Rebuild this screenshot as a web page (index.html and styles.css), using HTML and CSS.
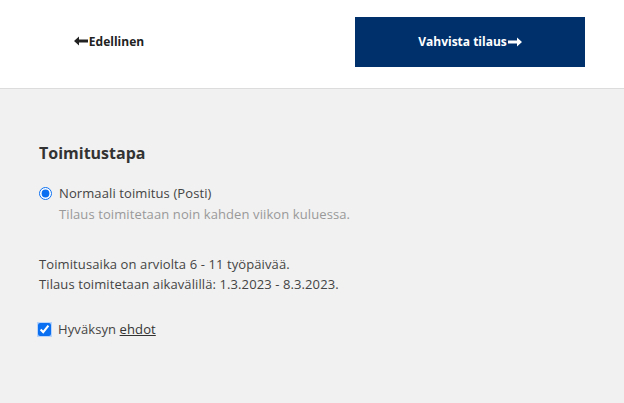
FILE: index.html
```html
<!DOCTYPE html>
<html lang="fi">
<head>
<meta charset="utf-8">
<title>Toimitustapa</title>
<link rel="stylesheet" href="styles.css">
</head>
<body>
<header class="topbar">
  <a class="back" href="#">
    <svg class="arrow" width="14" height="10" viewBox="0 0 14 10"><path d="M0 5 L5 0.5 L5 3.6 L14 3.6 L14 6.4 L5 6.4 L5 9.5 Z" fill="#222"/></svg>
    <span>Edellinen</span>
  </a>
  <button class="confirm" type="button">
    <span>Vahvista tilaus</span>
    <svg class="arrow" width="14" height="10" viewBox="0 0 14 10"><path d="M14 5 L9 0.5 L9 3.6 L0 3.6 L0 6.4 L9 6.4 L9 9.5 Z" fill="#fff"/></svg>
  </button>
</header>
<main class="content">
  <h2 class="title">Toimitustapa</h2>
  <div class="option">
    <label class="radio-row"><input type="radio" name="d" checked> <span>Normaali toimitus (Posti)</span></label>
    <p class="hint">Tilaus toimitetaan noin kahden viikon kuluessa.</p>
  </div>
  <div class="info">
    <p>Toimitusaika on arviolta 6 - 11 työpäivää.</p>
    <p>Tilaus toimitetaan aikavälillä: 1.3.2023 - 8.3.2023.</p>
  </div>
  <label class="check-row"><span class="focus"><input type="checkbox" checked></span> <span>Hyväksyn <a href="#">ehdot</a></span></label>
</main>
</body>
</html>
```
FILE: styles.css
```css
html, body { margin: 0; padding: 0; }
body {
  font-family: "Open Sans", "Liberation Sans", sans-serif;
  background: #f1f1f1;
  color: #444;
  height: 403px;
  overflow: hidden;
}
.topbar {
  background: #fff;
  height: 89px;
  border-bottom: 1px solid #dcdcdc;
  display: flex;
  align-items: flex-start;
  justify-content: space-between;
  padding: 17px 39px 0;
  box-sizing: border-box;
}
.back {
  width: 140px;
  height: 48px;
  display: flex;
  justify-content: center;
  align-items: center;
  gap: 1px;
  color: #222;
  font-weight: bold;
  font-size: 12px;
  text-decoration: none;
}
.confirm {
  width: 230px;
  height: 50px;
  background: #00306b;
  border: none;
  color: #fff;
  font-family: inherit;
  font-weight: bold;
  font-size: 12px;
  display: flex;
  align-items: center;
  justify-content: center;
  gap: 1px;
  padding: 0 0 1px;
}
.content {
  padding: 54px 39px 0;
}
.title {
  margin: 0;
  font-size: 16px;
  font-weight: bold;
  color: #333;
  line-height: 21px;
}
.option { margin-top: 21px; }
.radio-row, .check-row {
  display: flex;
  align-items: center;
  gap: 7px;
  font-size: 13px;
  letter-spacing: 0.1px;
  color: #444;
  line-height: 17px;
}
.radio-row input {
  margin: 0;
  width: 13px;
  height: 13px;
  accent-color: #0a6ff0;
}
.hint {
  margin: 4px 0 0 20px;
  font-size: 13px;
  letter-spacing: 0.1px;
  color: #999;
  line-height: 17px;
}
.info { margin-top: 33px; font-size: 13px; letter-spacing: 0.1px; color: #444; }
.info p { margin: 0 0 3px; line-height: 17px; }
.check-row { margin-top: 28px; gap: 6px; }
.focus {
  display: flex;
  padding: 1px;
  background: #b8d4fa;
  margin-left: -2px;
}
.check-row input {
  margin: 0;
  width: 13px;
  height: 13px;
  accent-color: #0a6ff0;
}
.check-row a { color: #333; text-decoration: underline; }
```
